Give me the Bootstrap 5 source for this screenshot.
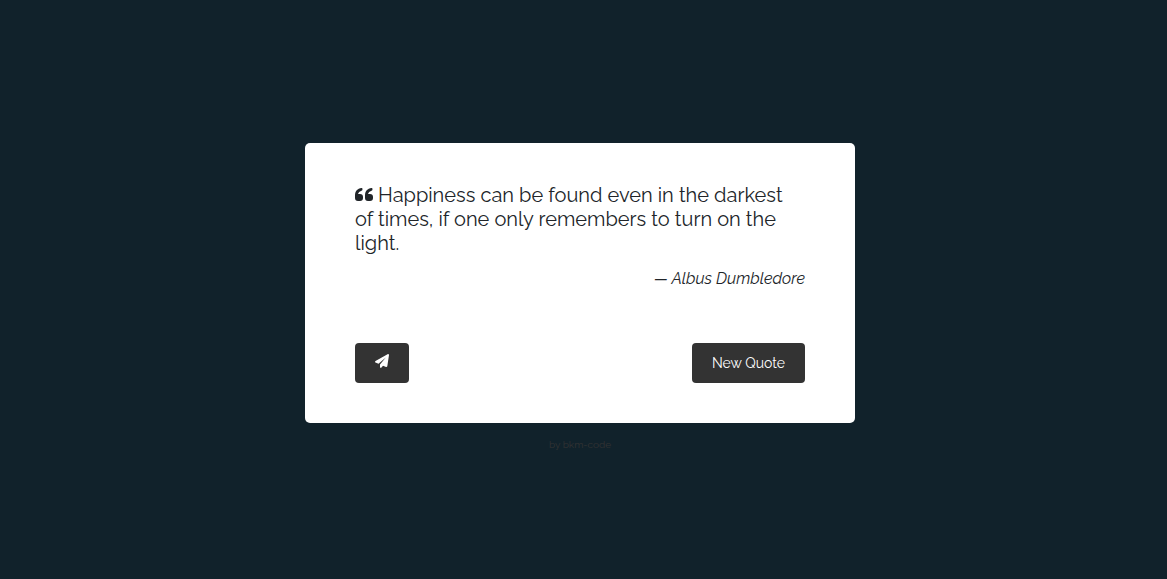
<!DOCTYPE html>
<html lang="en">
<head>
<meta charset="utf-8">
<meta name="viewport" content="width=device-width, initial-scale=1">
<title>Random Quote</title>
<link href="https://cdn.jsdelivr.net/npm/bootstrap@5.3.0/dist/css/bootstrap.min.css" rel="stylesheet">
<style>
  body { background: #11222b; color: #212529; font-family: Raleway, Lato, sans-serif; padding: 16px 7px 0 0; }
  .quote-box { width: 100%; max-width: 550px; background: #fff; border-radius: 5px; padding: 40px 50px; }
  .quote-text { font-size: 20px; line-height: 24px; margin-bottom: 12px; }
  .quote-text svg { width: 18px; height: 14px; margin-right: 5px; vertical-align: 0; }
  .quote-author { font-size: 16px; line-height: 24px; font-style: italic; margin-bottom: 52px; }
  .quote-btn { --bs-btn-color: #fff; --bs-btn-bg: #333; --bs-btn-hover-color: #fff; --bs-btn-hover-bg: #444; --bs-btn-border-width: 0;
    --bs-btn-border-radius: 4px; --bs-btn-padding-x: 20px; --bs-btn-padding-y: 8px; --bs-btn-font-size: 14px; --bs-btn-line-height: 24px; --bs-btn-font-weight: 400; }
  .quote-btn svg { width: 14px; height: 14px; display: block; margin-bottom: 4px; }
  .credit { font-size: 10px; line-height: 16px; margin-top: 14px; }
  .credit a { color: #333; text-decoration: none; }
</style>
</head>
<body class="min-vh-100 d-flex flex-column align-items-center justify-content-center">
<main class="quote-box">
  <blockquote class="m-0">
    <p class="quote-text"><svg viewBox="0 0 18 14" fill="currentColor" aria-hidden="true"><path id="mark-left" d="M6.500 0C2.500 .5 0 3 0 7.500V10Q0 13 3 13h2Q8 13 8 10V9Q8 6 5 6H3Q3.500 3.500 6.500 2.800Q7.500 2.500 7.500 1.200T6.500 0z"/><use href="#mark-left" x="10"/></svg>Happiness can be found even in the darkest of times, if one only remembers to turn on the light.</p>
    <p class="quote-author text-end">— Albus Dumbledore</p>
  </blockquote>
  <div class="d-flex justify-content-between">
    <button type="button" class="btn quote-btn" aria-label="Share quote"><svg viewBox="0 0 14 14" fill="currentColor" aria-hidden="true"><path d="M13 0L.5 7Q-.5 8 .5 8.500L3.500 9.700L10.800 3.500L5 10.500V13Q5.500 14.500 6.500 13.500L8 11.700L11 13Q12 13.200 12.300 12.300L14 1Q14 0 13 0z"/></svg></button>
    <button type="button" class="btn quote-btn">New Quote</button>
  </div>
</main>
<footer class="credit"><a href="#">by bkm-code</a></footer>
<script src="https://cdn.jsdelivr.net/npm/bootstrap@5.3.0/dist/js/bootstrap.bundle.min.js"></script>
</body>
</html>
